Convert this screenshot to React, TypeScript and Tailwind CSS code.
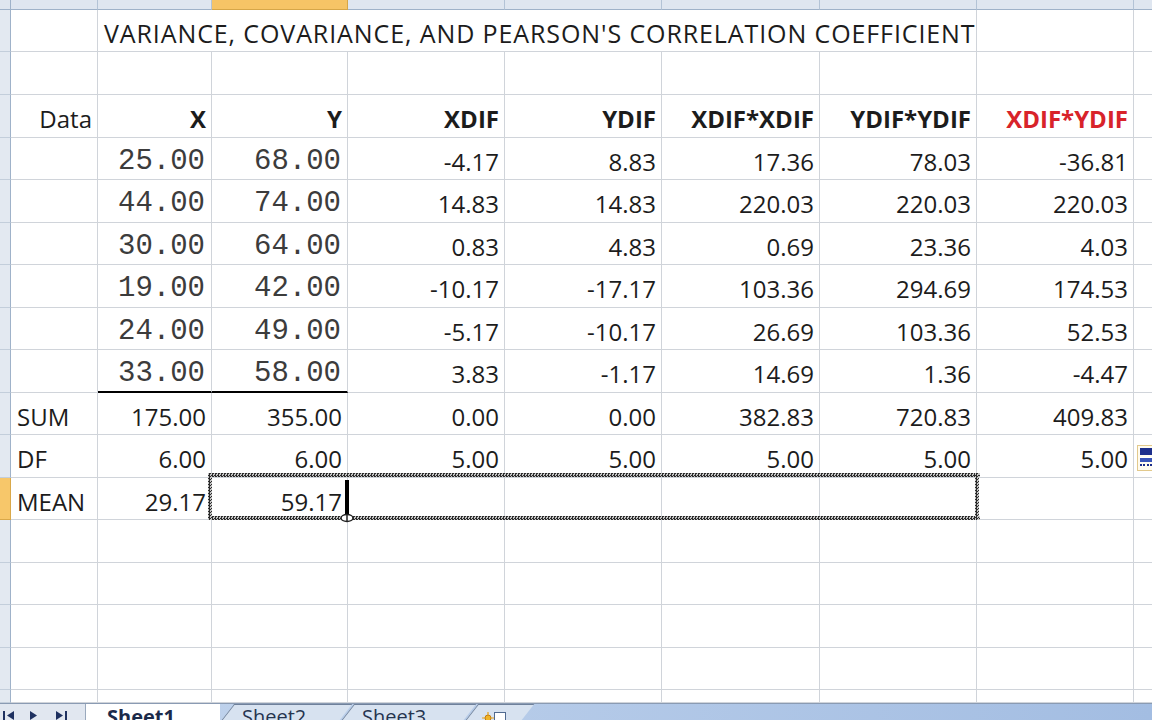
import type { ReactNode } from "react"

// column widths: row header, A..I
const widths = [11, 87, 114, 136, 157, 157, 158, 157, 157, 60]
const heights = [42, 43, 43, 42, 43, 42, 43, 42, 43, 42, 43, 42, 43, 42, 43, 42, 13]

const calibri = "font-['Open_Sans',sans-serif] text-[24px] text-[#1c1c1c]"
const courier = "font-['Liberation_Mono',monospace] text-[29px] text-[#3c3c3c]"

type CellSpec = { text?: string; mono?: boolean; bold?: boolean; left?: boolean; red?: boolean; under?: boolean }

const dataRows: string[][] = [
  ["25.00", "68.00", "-4.17", "8.83", "17.36", "78.03", "-36.81"],
  ["44.00", "74.00", "14.83", "14.83", "220.03", "220.03", "220.03"],
  ["30.00", "64.00", "0.83", "4.83", "0.69", "23.36", "4.03"],
  ["19.00", "42.00", "-10.17", "-17.17", "103.36", "294.69", "174.53"],
  ["24.00", "49.00", "-5.17", "-10.17", "26.69", "103.36", "52.53"],
  ["33.00", "58.00", "3.83", "-1.17", "14.69", "1.36", "-4.47"],
]

function Cell({ w, spec }: { w: number; spec?: CellSpec }) {
  const s = spec ?? {}
  return (
    <div
      className={`shrink-0 h-full flex items-center border-r border-b border-[#d0d4da] whitespace-nowrap ${
        s.left ? "justify-start pl-[6px]" : "justify-end pr-[5px]"
      } ${s.mono ? courier + " pr-[6px]" : calibri} ${s.bold ? "font-bold" : ""} ${
        s.red ? "!text-[#d8232a]" : ""
      } ${s.under ? "border-b-2 border-b-black" : ""}`}
      style={{ width: w }}
    >
      <span className="pt-[6px]">{s.text}</span>
    </div>
  )
}

function RowHead({ active }: { active?: boolean }) {
  return (
    <div
      className={`shrink-0 w-[11px] h-full border-r border-b ${
        active ? "bg-[#f7c76a] border-[#d9a849]" : "bg-[#e3e9f1] border-r-[#9fb2c9] border-b-[#c3cedb]"
      }`}
    />
  )
}

function Row({ h, cells, active }: { h: number; cells: (CellSpec | undefined)[]; active?: boolean }) {
  return (
    <div className="flex shrink-0" style={{ height: h }}>
      <RowHead active={active} />
      {widths.slice(1).map((w, i) => (
        <Cell key={i} w={w} spec={cells[i]} />
      ))}
    </div>
  )
}

function Edge({ className }: { className: string }) {
  return (
    <div
      className={`absolute bg-[repeating-conic-gradient(#2c2c2c_0%_25%,#c4c4c4_0%_50%)] bg-[length:3px_3px] ${className}`}
    />
  )
}

function Tab({ label, w, children }: { label?: string; w: number; children?: ReactNode }) {
  return (
    <div className="relative shrink-0 h-full" style={{ width: w }}>
      <div className="absolute inset-y-0 left-[8px] right-[-6px] -skew-x-[38deg] bg-[#d7e2f0] border-l border-t border-[#6f819b]" />
      <div className="relative pl-[22px] pt-[3px] font-['Open_Sans',sans-serif] text-[20px] leading-none text-[#25344f]">
        {label}
        {children}
      </div>
    </div>
  )
}

function NavArrows() {
  return (
    <svg width="80" height="16" viewBox="0 0 80 16" className="shrink-0">
      <g fill="#1e3160">
        <rect x="3" y="7" width="2" height="9" />
        <path d="M14 7 L7 11.5 L14 16 Z" />
        <path d="M30 7 L37 11.5 L30 16 Z" />
        <path d="M56 7 L63 11.5 L56 16 Z" />
        <rect x="65" y="7" width="2" height="9" />
      </g>
    </svg>
  )
}

export default function App() {
  const bodyRows: ReactNode[] = []
  let r = 0
  const h = () => heights[r++]

  // title row
  bodyRows.push(
    <div key="title" className="flex shrink-0" style={{ height: h() }}>
      <RowHead />
      <Cell w={87} />
      <div className={`shrink-0 w-[879px] h-full flex items-center pl-[6px] border-r border-b border-[#d0d4da] whitespace-nowrap ${calibri}`}>
        <span className="pt-[6px] text-[25px] tracking-[0.9px]">VARIANCE, COVARIANCE, AND PEARSON'S CORRELATION COEFFICIENT</span>
      </div>
      <Cell w={157} />
      <Cell w={60} />
    </div>
  )
  bodyRows.push(<Row key="blank" h={h()} cells={[]} />)
  bodyRows.push(
    <Row
      key="head"
      h={h()}
      cells={[
        { text: "Data" },
        { text: "X", bold: true },
        { text: "Y", bold: true },
        { text: "XDIF", bold: true },
        { text: "YDIF", bold: true },
        { text: "XDIF*XDIF", bold: true },
        { text: "YDIF*YDIF", bold: true },
        { text: "XDIF*YDIF", bold: true, red: true },
      ]}
    />
  )
  dataRows.forEach((d, i) => {
    const last = i === dataRows.length - 1
    bodyRows.push(
      <Row
        key={"d" + i}
        h={h()}
        cells={[
          undefined,
          { text: d[0], mono: true, under: last },
          { text: d[1], mono: true, under: last },
          ...d.slice(2).map((t) => ({ text: t })),
        ]}
      />
    )
  })
  bodyRows.push(
    <Row
      key="sum"
      h={h()}
      cells={[{ text: "SUM", left: true }, ...["175.00", "355.00", "0.00", "0.00", "382.83", "720.83", "409.83"].map((t) => ({ text: t }))]}
    />
  )
  bodyRows.push(
    <Row
      key="df"
      h={h()}
      cells={[{ text: "DF", left: true }, ...["6.00", "6.00", "5.00", "5.00", "5.00", "5.00", "5.00"].map((t) => ({ text: t }))]}
    />
  )
  bodyRows.push(
    <Row key="mean" h={h()} active cells={[{ text: "MEAN", left: true }, { text: "29.17" }, { text: "59.17" }]} />
  )
  while (r < heights.length) bodyRows.push(<Row key={"e" + r} h={h()} cells={[]} />)

  return (
    <div className="w-[1152px] h-[720px] overflow-hidden bg-white flex flex-col">
      {/* column headers, only the bottom sliver is on screen */}
      <div className="flex shrink-0 h-[10px]">
        <div className="shrink-0 w-[11px] h-full bg-[#dfe6ef] border-r border-b border-[#9fb2c9]" />
        {widths.slice(1).map((w, i) => (
          <div
            key={i}
            className={`shrink-0 h-full border-r border-b ${
              i === 2 ? "bg-[#f6c466] border-[#d6a648]" : "bg-[#dfe6f0] border-r-[#b3c3d6] border-b-[#9fb2c9]"
            }`}
            style={{ width: w }}
          />
        ))}
      </div>

      <div className="relative flex flex-col shrink-0">
        {bodyRows}

        {/* copy range marquee around C12:G12 */}
        <Edge className="left-[208px] top-[463px] w-[772px] h-[4px]" />
        <Edge className="left-[208px] top-[506px] w-[772px] h-[4px]" />
        <Edge className="left-[208px] top-[463px] w-[4px] h-[47px]" />
        <Edge className="left-[975px] top-[463px] w-[4px] h-[47px]" />

        {/* edit caret and fill handle */}
        <div className="absolute left-[345px] top-[470px] w-[4px] h-[36px] bg-black" />
        <svg className="absolute left-[339px] top-[503px]" width="16" height="10" viewBox="0 0 16 10">
          <ellipse cx="8" cy="5" rx="6" ry="3.5" fill="#fff" stroke="#222" strokeWidth="1.5" />
          <line x1="8" y1="1" x2="8" y2="9" stroke="#222" strokeWidth="1.5" />
        </svg>

        {/* auto fill options button */}
        <div className="absolute left-[1137px] top-[435px] w-[18px] h-[26px] bg-[#fffbef] border border-[#e2c98c] p-[2px] flex flex-col gap-[2px]">
          <div className="h-[7px] bg-[#1d2f8c]" />
          <div className="h-[5px] bg-[#3a55b8] border-t border-white" />
          <div className="h-[2px] border-t-2 border-dotted border-[#1d2f8c]" />
        </div>
      </div>

      {/* sheet tab strip */}
      <div className="flex h-[17px] shrink-0 border-t border-[#8a9bb3] bg-[linear-gradient(90deg,#c4d6ee,#a3bde2)]">
        <div className="shrink-0 w-[86px] h-full bg-[#e1e7f0] border-r border-[#9aa9bd] flex items-start">
          <NavArrows />
        </div>
        <div className="shrink-0 w-[134px] h-full bg-white pl-[21px] pt-[3px] font-['Open_Sans',sans-serif] font-bold text-[20px] leading-none text-[#1b2a4a]">
          Sheet1
        </div>
        <Tab label="Sheet2" w={120} />
        <Tab label="Sheet3" w={124} />
        <Tab w={58}>
          <span className="inline-flex items-start -ml-[4px]">
            <svg width="12" height="12" viewBox="0 0 12 12">
              <circle cx="6" cy="6" r="3" fill="#f0b429" stroke="#c47d0e" strokeWidth="1" />
              <path d="M6 0v3M6 9v3M0 6h3M9 6h3" stroke="#e6a21c" strokeWidth="1.2" />
            </svg>
            <span className="inline-block w-[12px] h-[12px] border border-[#506a90] bg-white" />
          </span>
        </Tab>
      </div>
    </div>
  )
}
